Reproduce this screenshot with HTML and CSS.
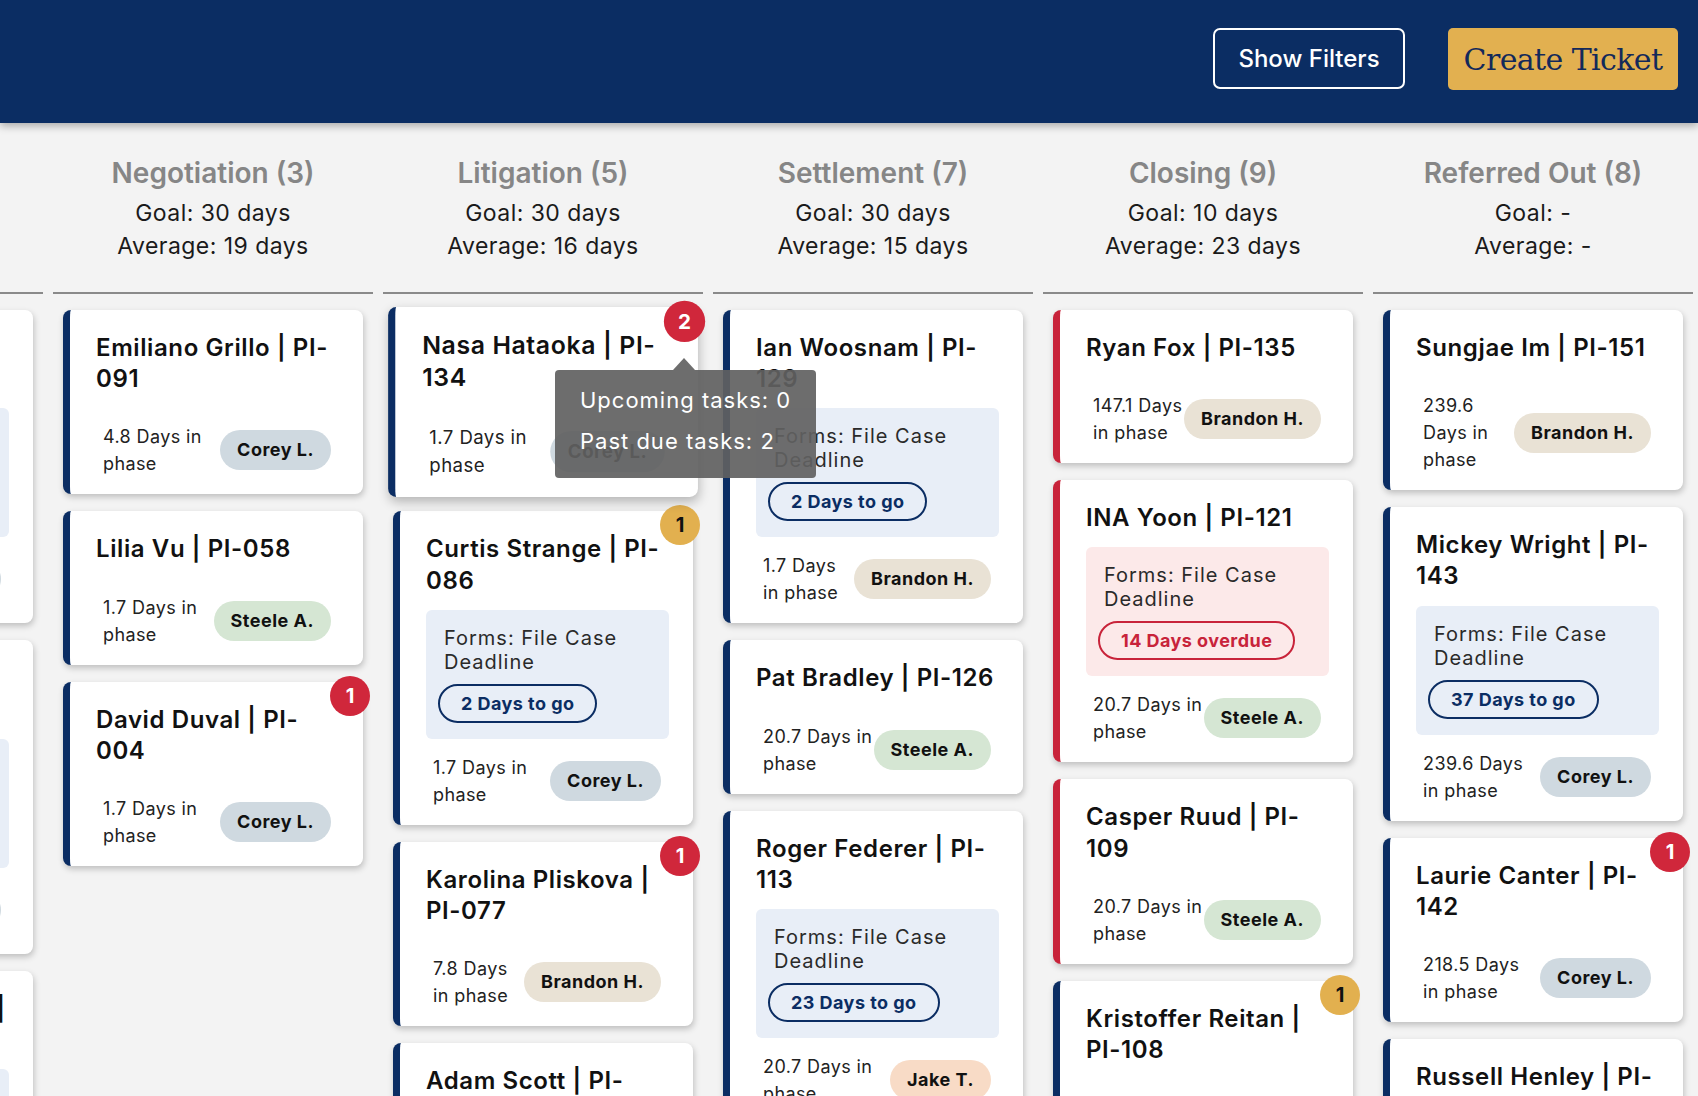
FILE: index.html
```html
<!DOCTYPE html>
<html lang="en">
<head>
  <meta charset="UTF-8">
  <title>Case Board</title>
  <link rel="stylesheet" href="styles.css">
</head>
<body>
  <header class="topbar">
    <button class="btn-filters">Show Filters</button>
    <button class="btn-create">Create Ticket</button>
  </header>

  <main class="board">

    <!-- left column, scrolled mostly out of view -->
    <section class="column">
      <div class="col-head">
        <h2 class="col-title">Treatment (6)</h2>
        <div class="col-stat">Goal: 60 days</div>
        <div class="col-stat">Average: 41 days</div>
      </div>
      <div class="col-cards">
        <div class="card">
          <h3 class="card-title">Collin Morikawa | PI-097</h3>
          <div class="task">
            <div class="task-name">Forms: File Case Deadline</div>
            <span class="due">5 Days to go</span>
          </div>
          <div class="card-foot">
            <span class="phase">3.1 Days in phase</span>
            <span class="owner owner-corey">Corey L.</span>
          </div>
        </div>
        <div class="card">
          <h3 class="card-title">Cameron Smith | PI-066</h3>
          <div class="task">
            <div class="task-name">Forms: File Case Deadline</div>
            <span class="due">9 Days to go</span>
          </div>
          <div class="card-foot">
            <span class="phase">6.4 Days in phase</span>
            <span class="owner owner-corey">Corey L.</span>
          </div>
        </div>
        <div class="card">
          <h3 class="card-title">Xander Schauffele | PI-073</h3>
          <div class="task">
            <div class="task-name">Forms: File Case Deadline</div>
            <span class="due">12 Days to go</span>
          </div>
          <div class="card-foot">
            <span class="phase">8.2 Days in phase</span>
            <span class="owner owner-steele">Steele A.</span>
          </div>
        </div>
      </div>
    </section>

    <section class="column">
      <div class="col-head">
        <h2 class="col-title">Negotiation (3)</h2>
        <div class="col-stat">Goal: 30 days</div>
        <div class="col-stat">Average: 19 days</div>
      </div>
      <div class="col-cards">
        <div class="card">
          <h3 class="card-title">Emiliano Grillo | PI-091</h3>
          <div class="card-foot">
            <span class="phase">4.8 Days in phase</span>
            <span class="owner owner-corey">Corey L.</span>
          </div>
        </div>
        <div class="card">
          <h3 class="card-title">Lilia Vu | PI-058</h3>
          <div class="card-foot">
            <span class="phase">1.7 Days in phase</span>
            <span class="owner owner-steele">Steele A.</span>
          </div>
        </div>
        <div class="card">
          <span class="badge">1</span>
          <h3 class="card-title">David Duval | PI-004</h3>
          <div class="card-foot">
            <span class="phase">1.7 Days in phase</span>
            <span class="owner owner-corey">Corey L.</span>
          </div>
        </div>
      </div>
    </section>

    <section class="column">
      <div class="col-head">
        <h2 class="col-title">Litigation (5)</h2>
        <div class="col-stat">Goal: 30 days</div>
        <div class="col-stat">Average: 16 days</div>
      </div>
      <div class="col-cards">
        <div class="hover-wrap">
          <div class="card is-hover">
            <span class="badge">2</span>
            <h3 class="card-title">Nasa Hataoka | PI-134</h3>
            <div class="card-foot">
              <span class="phase">1.7 Days in phase</span>
              <span class="owner owner-corey">Corey L.</span>
            </div>
          </div>
          <div class="tip">
            <div>Upcoming tasks: 0</div>
            <div>Past due tasks: 2</div>
          </div>
        </div>
        <div class="card">
          <span class="badge warn">1</span>
          <h3 class="card-title">Curtis Strange | PI-086</h3>
          <div class="task">
            <div class="task-name">Forms: File Case Deadline</div>
            <span class="due">2 Days to go</span>
          </div>
          <div class="card-foot">
            <span class="phase">1.7 Days in phase</span>
            <span class="owner owner-corey">Corey L.</span>
          </div>
        </div>
        <div class="card">
          <span class="badge">1</span>
          <h3 class="card-title">Karolina Pliskova | PI-077</h3>
          <div class="card-foot">
            <span class="phase">7.8 Days in phase</span>
            <span class="owner owner-brandon">Brandon H.</span>
          </div>
        </div>
        <div class="card">
          <h3 class="card-title">Adam Scott | PI-098</h3>
          <div class="card-foot">
            <span class="phase">7.8 Days in phase</span>
            <span class="owner owner-steele">Steele A.</span>
          </div>
        </div>
      </div>
    </section>

    <section class="column">
      <div class="col-head">
        <h2 class="col-title">Settlement (7)</h2>
        <div class="col-stat">Goal: 30 days</div>
        <div class="col-stat">Average: 15 days</div>
      </div>
      <div class="col-cards">
        <div class="card">
          <h3 class="card-title">Ian Woosnam | PI-129</h3>
          <div class="task">
            <div class="task-name">Forms: File Case Deadline</div>
            <span class="due">2 Days to go</span>
          </div>
          <div class="card-foot">
            <span class="phase">1.7 Days in phase</span>
            <span class="owner owner-brandon">Brandon H.</span>
          </div>
        </div>
        <div class="card">
          <h3 class="card-title">Pat Bradley | PI-126</h3>
          <div class="card-foot">
            <span class="phase">20.7 Days in phase</span>
            <span class="owner owner-steele">Steele A.</span>
          </div>
        </div>
        <div class="card">
          <h3 class="card-title">Roger Federer | PI-113</h3>
          <div class="task">
            <div class="task-name">Forms: File Case Deadline</div>
            <span class="due">23 Days to go</span>
          </div>
          <div class="card-foot">
            <span class="phase">20.7 Days in phase</span>
            <span class="owner owner-jake">Jake T.</span>
          </div>
        </div>
      </div>
    </section>

    <section class="column">
      <div class="col-head">
        <h2 class="col-title">Closing (9)</h2>
        <div class="col-stat">Goal: 10 days</div>
        <div class="col-stat">Average: 23 days</div>
      </div>
      <div class="col-cards">
        <div class="card overdue">
          <h3 class="card-title">Ryan Fox | PI-135</h3>
          <div class="card-foot">
            <span class="phase">147.1 Days in phase</span>
            <span class="owner owner-brandon">Brandon H.</span>
          </div>
        </div>
        <div class="card overdue">
          <h3 class="card-title">INA Yoon | PI-121</h3>
          <div class="task late">
            <div class="task-name">Forms: File Case Deadline</div>
            <span class="due late">14 Days overdue</span>
          </div>
          <div class="card-foot">
            <span class="phase">20.7 Days in phase</span>
            <span class="owner owner-steele">Steele A.</span>
          </div>
        </div>
        <div class="card overdue">
          <h3 class="card-title">Casper Ruud | PI-109</h3>
          <div class="card-foot">
            <span class="phase">20.7 Days in phase</span>
            <span class="owner owner-steele">Steele A.</span>
          </div>
        </div>
        <div class="card">
          <span class="badge warn">1</span>
          <h3 class="card-title">Kristoffer Reitan | PI-108</h3>
          <div class="card-foot">
            <span class="phase">20.7 Days in phase</span>
            <span class="owner owner-corey">Corey L.</span>
          </div>
        </div>
      </div>
    </section>

    <section class="column">
      <div class="col-head">
        <h2 class="col-title">Referred Out (8)</h2>
        <div class="col-stat">Goal: -</div>
        <div class="col-stat">Average: -</div>
      </div>
      <div class="col-cards">
        <div class="card">
          <h3 class="card-title">Sungjae Im | PI-151</h3>
          <div class="card-foot">
            <span class="phase">239.6 Days in phase</span>
            <span class="owner owner-brandon">Brandon H.</span>
          </div>
        </div>
        <div class="card">
          <h3 class="card-title">Mickey Wright | PI-143</h3>
          <div class="task">
            <div class="task-name">Forms: File Case Deadline</div>
            <span class="due">37 Days to go</span>
          </div>
          <div class="card-foot">
            <span class="phase">239.6 Days in phase</span>
            <span class="owner owner-corey">Corey L.</span>
          </div>
        </div>
        <div class="card">
          <span class="badge">1</span>
          <h3 class="card-title">Laurie Canter | PI-142</h3>
          <div class="card-foot">
            <span class="phase">218.5 Days in phase</span>
            <span class="owner owner-corey">Corey L.</span>
          </div>
        </div>
        <div class="card">
          <h3 class="card-title">Russell Henley | PI-139</h3>
          <div class="card-foot">
            <span class="phase">218.5 Days in phase</span>
            <span class="owner owner-brandon">Brandon H.</span>
          </div>
        </div>
      </div>
    </section>

  </main>
</body>
</html>
```

FILE: styles.css
```css
html, body {
  height: 100%;
}
body {
  margin: 0;
  overflow: hidden;
  background: #f3f3f3;
  font-family: Inter, "Noto Sans", Arial, sans-serif;
  color: #111;
}

/* top bar */
.topbar {
  position: relative;
  z-index: 2;
  box-sizing: border-box;
  height: 123px;
  padding: 28px 20px 0 0;
  display: flex;
  justify-content: flex-end;
  align-items: flex-start;
  gap: 43px;
  background: #0b2d63;
  box-shadow: 0 3px 8px rgba(0, 0, 0, 0.3);
}
.btn-filters {
  width: 192px;
  height: 61px;
  border: 2px solid #fff;
  border-radius: 7px;
  background: transparent;
  color: #fff;
  font-family: Inter, sans-serif;
  font-size: 24px;
  font-weight: 500;
}
.btn-create {
  width: 230px;
  height: 62px;
  border: 0;
  border-radius: 5px;
  background: #e2b050;
  color: #13295a;
  font-family: "DejaVu Serif", "Liberation Serif", serif;
  font-size: 30px;
  letter-spacing: -0.6px;
}

/* board */
.board {
  display: flex;
  gap: 10px;
  margin-left: -277px;
}
.column {
  flex: 0 0 320px;
}
.col-head {
  text-align: center;
  padding: 29px 0 29px;
  border-bottom: 2px solid #8a8a8a;
}
.col-title {
  margin: 0 0 3px;
  font-size: 28px;
  line-height: 42px;
  font-weight: 600;
  color: #868686;
}
.col-stat {
  font-size: 23px;
  line-height: 33px;
  letter-spacing: 0.45px;
  color: #1a1a1a;
}
.col-cards {
  display: flex;
  flex-direction: column;
  gap: 17px;
  padding: 16px 10px;
}

/* cards */
.card {
  position: relative;
  display: flex;
  flex-direction: column;
  background: #fff;
  border-left: 7px solid #0b2d63;
  border-radius: 8px;
  padding: 22px 24px 17px 26px;
  box-shadow: 1px 3px 6px rgba(0, 0, 0, 0.22);
}
.card.overdue {
  border-left-color: #c8233a;
}
.card-title {
  margin: 0 0 14px;
  font-size: 24px;
  line-height: 1.3;
  font-weight: 600;
  letter-spacing: 0.6px;
  color: #111;
}
.badge {
  position: absolute;
  top: -6px;
  right: -7px;
  width: 40px;
  height: 40px;
  border-radius: 50%;
  display: flex;
  align-items: center;
  justify-content: center;
  background: #d0273b;
  color: #fff;
  font-size: 20px;
  font-weight: 700;
}
.badge.warn {
  background: #e2b04f;
  color: #111;
}

/* task block */
.task {
  background: #e8eef7;
  border-radius: 6px;
  padding: 16px 16px 16px 12px;
}
.task.late {
  background: #fce9e9;
}
.task-name {
  padding-left: 6px;
  margin-bottom: 10px;
  font-size: 20px;
  line-height: 24px;
  letter-spacing: 1px;
  color: #2a2a2a;
}
.due {
  display: inline-block;
  box-sizing: border-box;
  height: 39px;
  padding: 0 21px;
  border: 2px solid #0b2d63;
  border-radius: 20px;
  line-height: 35px;
  font-size: 18px;
  font-weight: 700;
  letter-spacing: 0.45px;
  color: #0b2d63;
}
.due.late {
  border-color: #c8233a;
  color: #c8233a;
}

/* footer row */
.card-foot {
  display: flex;
  align-items: center;
  justify-content: space-between;
  margin-top: 15px;
  padding: 0 8px 0 7px;
}
.phase {
  font-size: 18px;
  line-height: 27px;
  letter-spacing: 0.4px;
  color: #222;
}
.owner {
  flex: none;
  height: 40px;
  line-height: 40px;
  padding: 0 17px;
  border-radius: 20px;
  font-size: 18px;
  font-weight: 700;
  letter-spacing: 0.5px;
  color: #111;
}
.owner-corey { background: #cfd9e0; }
.owner-brandon { background: #e9e2d5; }
.owner-steele { background: #d5e6d3; }
.owner-jake { background: #f8dbc6; }

/* hovered card + tooltip */
.hover-wrap {
  position: relative;
  z-index: 5;
}
.card.is-hover {
  transform: scale(1.033);
  box-shadow: 1px 4px 10px rgba(0, 0, 0, 0.25);
}
.tip {
  position: absolute;
  left: 162px;
  top: 60px;
  padding: 10px 25px 16px;
  border-radius: 4px;
  background: rgba(97, 97, 97, 0.92);
  color: #fff;
  font-size: 22px;
  line-height: 41px;
  letter-spacing: 1px;
  white-space: nowrap;
}
.tip::before {
  content: "";
  position: absolute;
  top: -12px;
  left: 118px;
  border-left: 11px solid transparent;
  border-right: 11px solid transparent;
  border-bottom: 12px solid rgba(97, 97, 97, 0.92);
}
```
